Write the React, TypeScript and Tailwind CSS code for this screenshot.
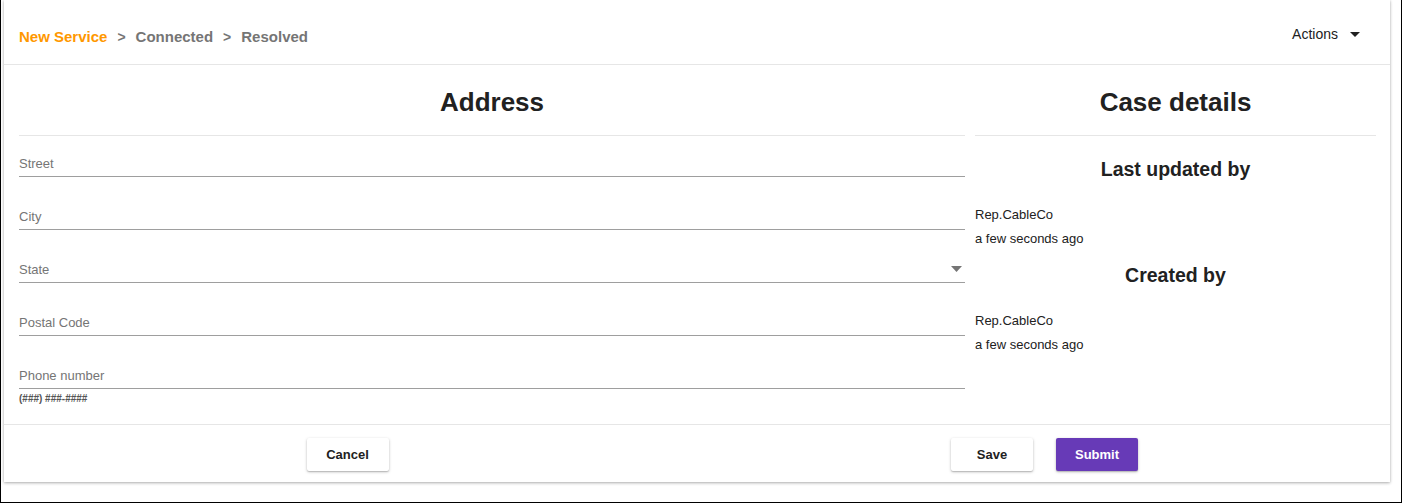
import React from "react";

function Field({ label, select }: { label: string; select?: boolean }) {
  return (
    <div className="h-[41px] flex items-end justify-between border-b border-[#9e9e9e]">
      <span className="text-[13px] leading-[16px] pb-[4px] text-[#757575]">{label}</span>
      {select && (
        <svg width="11" height="6" viewBox="0 0 11 6" className="mb-[10px] mr-[3px]">
          <path d="M0 0 L11 0 L5.5 6 Z" fill="#757575" />
        </svg>
      )}
    </div>
  );
}

function Btn({ children, primary }: { children: React.ReactNode; primary?: boolean }) {
  return (
    <button
      className={
        "h-[33px] w-[82px] rounded-[2px] text-[13px] font-bold shadow-[0_1px_3px_rgba(0,0,0,0.25),0_1px_1px_rgba(0,0,0,0.12)] " +
        (primary ? "bg-[#673ab7] text-white" : "bg-white text-[#212121]")
      }
    >
      {children}
    </button>
  );
}

export default function App() {
  return (
    <div
      className="w-[1402px] h-[503px] bg-white border-l border-r border-b border-black overflow-hidden text-[#212121]"
      style={{ fontFamily: '"Liberation Sans", Arial, sans-serif' }}
    >
      <div className="ml-[3px] w-[1386px] h-[482px] bg-white shadow-[0_1px_3px_rgba(0,0,0,0.3),0_0_2px_rgba(0,0,0,0.1)] flex flex-col">
        {/* header */}
        <div className="h-[65px] border-b border-[#e6e6e6] flex items-center justify-between pl-[15px] pr-[30px] pt-[10px]">
          <div className="flex items-center text-[15px] font-bold text-[#757575]">
            <span className="text-[#ff9800]">New Service</span>
            <span className="mx-[10px] text-[14px]">&gt;</span>
            <span>Connected</span>
            <span className="mx-[10px] text-[14px]">&gt;</span>
            <span>Resolved</span>
          </div>
          <div className="flex items-center text-[14px] text-[#212121] -mt-[5px]">
            <span>Actions</span>
            <svg width="10" height="5" viewBox="0 0 10 5" className="ml-[12px]">
              <path d="M0 0 L10 0 L5 5 Z" fill="#212121" />
            </svg>
          </div>
        </div>

        {/* body */}
        <div className="flex-1 flex gap-[10px] pl-[15px] pr-[14px]">
          <div className="w-[946px] flex flex-col">
            <div className="h-[71px] flex items-center justify-center border-b border-[#e6e6e6] pt-[3px]">
              <h2 className="text-[26px] font-bold leading-[30px]">Address</h2>
            </div>
            <div className="flex flex-col gap-[12px]">
              <Field label="Street" />
              <Field label="City" />
              <Field label="State" select />
              <Field label="Postal Code" />
              <Field label="Phone number" />
            </div>
            <div className="text-[10px] leading-[12px] mt-[4px] font-bold text-[#555]">(###) ###-####</div>
          </div>
          <div className="flex-1 flex flex-col">
            <div className="h-[71px] flex items-center justify-center border-b border-[#e6e6e6] pt-[3px]">
              <h2 className="text-[26px] font-bold leading-[30px]">Case details</h2>
            </div>
            <h3 className="text-[19.5px] font-bold leading-[24px] text-center mt-[21px]">Last updated by</h3>
            <div className="text-[13px] leading-[24px] mt-[22px]">Rep.CableCo</div>
            <div className="text-[13px] leading-[24px]">a few seconds ago</div>
            <h3 className="text-[19.5px] font-bold leading-[24px] text-center mt-[12px]">Created by</h3>
            <div className="text-[13px] leading-[24px] mt-[22px]">Rep.CableCo</div>
            <div className="text-[13px] leading-[24px]">a few seconds ago</div>
          </div>
        </div>

        {/* footer */}
        <div className="h-[58px] border-t border-[#e6e6e6] flex pt-[13px]">
          <div className="flex-1 flex justify-center items-start pr-[10px]">
            <Btn>Cancel</Btn>
          </div>
          <div className="flex-1 flex justify-center items-start gap-[23px] pr-[2px]">
            <Btn>Save</Btn>
            <Btn primary>Submit</Btn>
          </div>
        </div>
      </div>
    </div>
  );
}
